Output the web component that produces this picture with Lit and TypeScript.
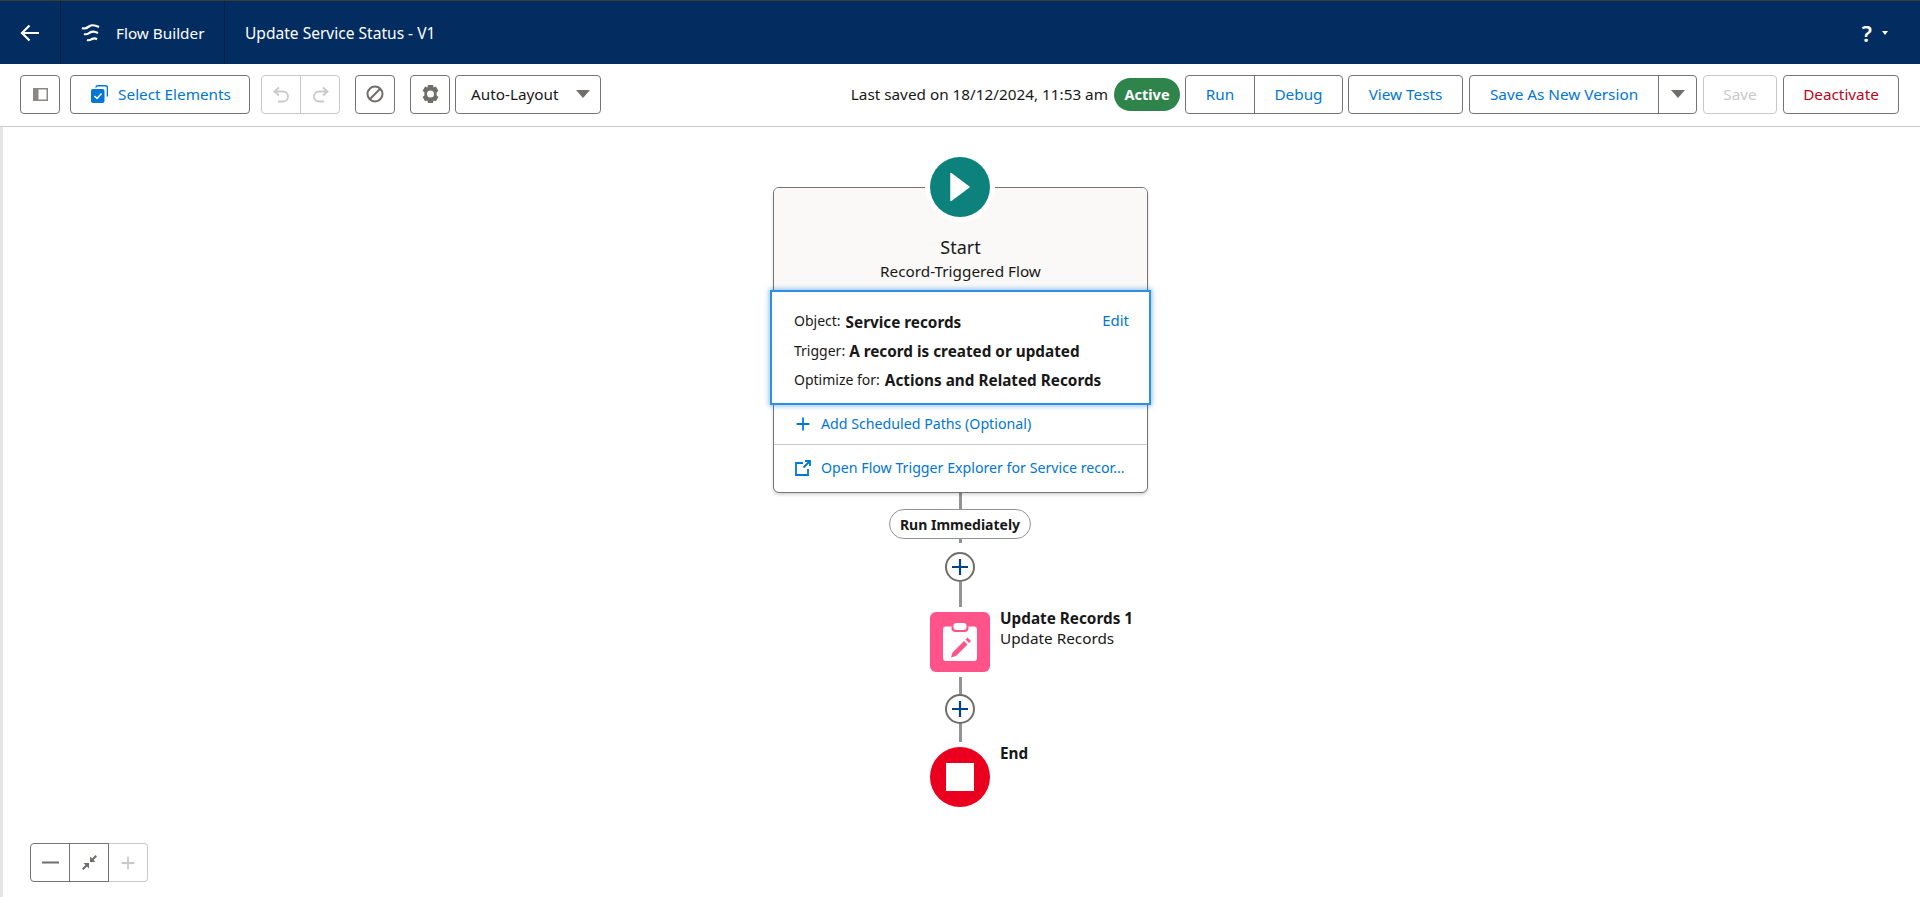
import { LitElement, html, css, svg } from "lit";
import { customElement } from "lit/decorators.js";

const plus = svg`<path d="M10 2v16M2 10h16" fill="none" stroke="currentColor" stroke-width="2.2"/>`;

@customElement("app-root")
export class AppRoot extends LitElement {
  static styles = css`
    :host { display: block; width: 1920px; height: 897px; overflow: hidden; background: #fff; color: #181818;
      font-family: "Noto Sans", "Open Sans", sans-serif; font-size: 15.3px; position: relative; }
    * { box-sizing: border-box; }
    svg { display: block; }
    .strip { height: 1px; background: #3a3a3a; }
    .head { height: 63px; background: #032d60; color: #fff; display: flex; align-items: center; }
    .cell { height: 100%; display: flex; align-items: center; border-right: 1px solid #02204a; }
    .back { width: 61px; justify-content: center; }
    .brand { width: 164px; padding-left: 20px; gap: 15px; }
    .title { padding-left: 20px; flex: 1; font-size: 15.55px; }
    .help { display: flex; align-items: center; gap: 10px; padding-right: 32px; font-size: 22px; font-weight: 600; }
    .caret { width: 0; height: 0; border-left: 3.5px solid transparent; border-right: 3.5px solid transparent; border-top: 4px solid #fff; }
    .bar { height: 63px; border-bottom: 1px solid #c9c9c9; display: flex; align-items: center; padding: 0 21px 2px 20px; }
    .btn { height: 39px; border: 1px solid #747474; border-radius: 4px; background: #fff; color: #0176d3; display: flex; align-items: center; justify-content: center; white-space: nowrap; }
    .ib { width: 40px; color: #706e6b; }
    .group { display: flex; height: 39px; border: 1px solid #747474; border-radius: 4px; }
    .group > div { display: flex; align-items: center; justify-content: center; color: #0176d3; }
    .group > div + div { border-left: 1px solid #747474; }
    .off { border-color: #c9c9c9; }
    .off > div { color: #c9c9c9; }
    .off > div + div { border-left-color: #c9c9c9; }
    .select { width: 180px; margin-left: 10px; gap: 10px; padding-left: 2px; }
    .undo { width: 79px; margin-left: 11px; }
    .undo > div { flex: 1; }
    .block { margin-left: 15px; }
    .gear { margin-left: 15px; }
    .auto { width: 146px; margin-left: 5px; color: #181818; justify-content: space-between; padding: 0 10px 0 15px; }
    .tri { width: 0; height: 0; border-left: 7px solid transparent; border-right: 7px solid transparent; border-top: 8px solid #706e6b; }
    .saved { margin-left: auto; white-space: nowrap; }
    .active { width: 66px; height: 33px; margin-left: 6px; border-radius: 17px; background: #2e844a; color: #fff; font-size: 14.5px; font-weight: 700; display: flex; align-items: center; justify-content: center; }
    .rd { width: 158px; margin-left: 5px; }
    .rd .run { width: 68px; }
    .rd .dbg { flex: 1; }
    .tests { width: 115px; margin-left: 5px; }
    .sv { width: 228px; margin-left: 6px; }
    .sv .a { flex: 1; }
    .sv .b { width: 38px; }
    .save { width: 74px; margin-left: 6px; color: #c9c9c9; border-color: #c9c9c9; }
    .deact { width: 116px; margin-left: 6px; color: #ba0517; }
    .canvas { position: relative; height: 770px; border-left: 3px solid #e5e5e5; }
    .canvas > * { position: absolute; }
    .card { left: 770px; top: 60px; width: 375px; height: 306px; border: 1px solid #747474; border-radius: 6px; background: #fff; box-shadow: 0 2px 3px rgba(0,0,0,.16); overflow: hidden; }
    .card-top { height: 135px; background: #faf9f7; display: flex; flex-direction: column; align-items: center; padding-top: 46px; }
    .card-top .t { font-size: 18px; line-height: 26px; }
    .card-top .s { line-height: 22px; }
    .link { display: flex; align-items: center; gap: 10px; padding-left: 21px; color: #0176d3; font-size: 14.2px; white-space: nowrap; }
    .spacer { height: 80px; }
    .l0 { height: 42px; border-bottom: 1px solid #c9c9c9; }
    .l2 { height: 45px; }
    .start { left: 922px; top: 25px; width: 70px; height: 70px; border-radius: 50%; background: #fff; display: flex; align-items: center; justify-content: center; }
    .disc { width: 60px; height: 60px; border-radius: 50%; display: flex; align-items: center; justify-content: center; }
    .teal { background: #0d827c; }
    .red { background: #ea001e; }
    .stop { width: 28px; height: 28px; background: #fff; }
    .pop { left: 767px; top: 163px; width: 381px; height: 115px; background: #fff; border: 2px solid #2e8fe6; box-shadow: 0 0 5px 1px rgba(1,118,211,.45); padding: 15px 20px 0 22px; font-size: 14px; }
    .row { height: 29px; display: flex; align-items: center; white-space: nowrap; }
    .row b { font-size: 15.3px; font-weight: 700; }
    .r1 b { margin-left: 5px; }
    .r1 span { margin-bottom: 3px; }
    .r2 b { margin-left: 4px; }
    .r3 b { margin-left: 5px; }
    .edit { margin-left: auto; color: #0176d3; font-size: 15px; }
    .ln { left: 955.5px; width: 3px; background: #939393; }
    .ln1 { top: 366px; height: 50px; }
    .ln2 { top: 455px; height: 25px; }
    .ln3 { top: 550px; height: 50px; }
    .ln4 { top: 596px; height: 19px; }
    .pill { left: 886px; top: 382px; width: 142px; height: 30px; border: 1px solid #939393; border-radius: 15px; background: #fff; font-size: 14px; font-weight: 700; display: flex; align-items: center; justify-content: center; white-space: nowrap; }
    .add { left: 942px; width: 30px; height: 30px; border: 2px solid #706e6b; border-radius: 50%; background: #fff; color: #014486; display: flex; align-items: center; justify-content: center; }
    .a1 { top: 425px; }
    .a2 { top: 567px; }
    .pink { left: 927px; top: 485px; width: 60px; height: 60px; border-radius: 6px; background: #ff538a; display: flex; align-items: center; justify-content: center; }
    .end { left: 927px; top: 620px; }
    .lbl { left: 997px; white-space: nowrap; line-height: 20px; }
    .lbl b { display: block; font-weight: 700; }
    .lb1 { top: 481px; }
    .lb2 { top: 616px; }
    .zoom { left: 27px; top: 716px; display: flex; height: 39px; }
    .zoom > div { width: 40px; background: #fff; border: 1px solid #747474; color: #706e6b; display: flex; align-items: center; justify-content: center; }
    .zoom .minus { border-radius: 4px 0 0 4px; }
    .zoom .fit { margin-left: -1px; }
    .zoom .in { width: 39px; color: #c9c9c9; border-color: #c9c9c9; border-left: 0; border-radius: 0 4px 4px 0; }
  `;

  render() {
    return html`
      <div class="strip"></div>
      <header class="head">
        <div class="cell back">
          <svg width="20" height="18" viewBox="0 0 20 18"><path d="M19 9H2M9.500 1.500L2 9l7.500 7.500" fill="none" stroke="#fff" stroke-width="2.200"/></svg>
        </div>
        <div class="cell brand">
          <svg width="20" height="20" viewBox="0 0 20 20"><path d="M1 5c3 1.500 5 0 7-1.500s5-2 10 .5M3 11c3 1 4.500-.5 6-1.500s4-1.500 8 .5M6 17c2 .8 3.500-.2 5-1s3-1 5 .2" fill="none" stroke="#fff" stroke-width="2.200"/></svg>
          <span>Flow Builder</span>
        </div>
        <div class="title">Update Service Status - V1</div>
        <div class="help"><span>?</span><i class="caret"></i></div>
      </header>
      <div class="bar">
        <div class="btn ib">
          <svg width="15" height="13" viewBox="0 0 15 13"><rect x=".75" y=".75" width="13.500" height="11.500" fill="#fff" stroke="#8a8886" stroke-width="1.500"/><rect x="1" y="1" width="4.500" height="11" fill="#8a8886"/></svg>
        </div>
        <div class="btn select">
          <svg width="17" height="18" viewBox="0 0 17 18"><path d="M5 2.500Q5 .8 6.700 .8h8q1.700 0 1.700 1.700v9" fill="none" stroke="#0176d3" stroke-width="1.400"/><rect x="0" y="4" width="13.500" height="14" rx="2" fill="#0176d3"/><path d="M3.500 11l2.500 2.500 4.500-5" fill="none" stroke="#fff" stroke-width="1.500"/></svg>
          <span>Select Elements</span>
        </div>
        <div class="group off undo">
          <div><svg width="17" height="17" viewBox="0 0 17 17"><path d="M6 1.500L1.500 5.500 6 9.500M2 5.500h8a5 5 0 0 1 0 10H5" fill="none" stroke="currentColor" stroke-width="1.800"/></svg></div>
          <div><svg width="17" height="17" viewBox="0 0 17 17"><path d="M11 1.500l4.500 4L11 9.500M15 5.500H7a5 5 0 0 0 0 10h5" fill="none" stroke="currentColor" stroke-width="1.800"/></svg></div>
        </div>
        <div class="btn ib block">
          <svg width="18" height="18" viewBox="0 0 18 18"><circle cx="9" cy="9" r="7.500" fill="none" stroke="#706e6b" stroke-width="2"/><path d="M3.800 14.200L14.200 3.800" stroke="#706e6b" stroke-width="2"/></svg>
        </div>
        <div class="btn ib gear">
          <svg width="17" height="18" viewBox="0 0 17 18"><path fill-rule="evenodd" fill="#706e6b" d="M6 0h5l.6 2.400 2.300-.8 2.500 4.200-1.800 1.700v2.900l1.800 1.700-2.500 4.200-2.300-.8L11 18H6l-.6-2.500-2.300.8L.6 12.100l1.800-1.700V7.500L.6 5.800l2.500-4.200 2.300.8zM8.500 5.500a3.500 3.500 0 1 0 0 7 3.500 3.500 0 0 0 0-7z"/></svg>
        </div>
        <div class="btn auto"><span>Auto-Layout</span><i class="tri"></i></div>
        <div class="saved">Last saved on 18/12/2024, 11:53 am</div>
        <div class="active">Active</div>
        <div class="group rd"><div class="run">Run</div><div class="dbg">Debug</div></div>
        <div class="btn tests">View Tests</div>
        <div class="group sv"><div class="a">Save As New Version</div><div class="b"><i class="tri"></i></div></div>
        <div class="btn save">Save</div>
        <div class="btn deact">Deactivate</div>
      </div>
      <main class="canvas">
        <div class="ln ln1"></div>
        <div class="ln ln2"></div>
        <div class="ln ln3"></div>
        <div class="ln ln4"></div>
        <section class="card">
          <div class="card-top">
            <div class="t">Start</div>
            <div class="s">Record-Triggered Flow</div>
          </div>
          <div class="spacer"></div>
          <div class="link l0">
            <svg width="16" height="16" viewBox="0 0 20 20">${plus}</svg>
            <span>Add Scheduled Paths (Optional)</span>
          </div>
          <div class="link l2">
            <svg width="16" height="16" viewBox="0 0 16 16"><path d="M8 3H1v12h12V9M8.500 7.500L15 1M10 1h5v5" fill="none" stroke="#0176d3" stroke-width="1.800"/></svg>
            <span>Open Flow Trigger Explorer for Service recor...</span>
          </div>
        </section>
        <div class="start">
          <div class="disc teal">
            <svg width="20" height="30" viewBox="0 0 20 30"><path d="M1 1.500v27L19 15z" fill="#fff" stroke="#fff" stroke-linejoin="round" stroke-width="1.500"/></svg>
          </div>
        </div>
        <div class="pop">
          <div class="row r1"><span>Object:</span><b>Service records</b><span class="edit">Edit</span></div>
          <div class="row r2"><span>Trigger:</span><b>A record is created or updated</b></div>
          <div class="row r3"><span>Optimize for:</span><b>Actions and Related Records</b></div>
        </div>
        <div class="pill">Run Immediately</div>
        <div class="add a1"><svg width="20" height="20" viewBox="0 0 20 20">${plus}</svg></div>
        <div class="pink">
          <svg width="34" height="38" viewBox="0 0 34 38"><path fill="#fff" d="M3 3.500h5.500V5a4 4 0 0 0 4 4h9a4 4 0 0 0 4-4V3.500H31a3 3 0 0 1 3 3V35a3 3 0 0 1-3 3H3a3 3 0 0 1-3-3V6.500a3 3 0 0 1 3-3z"/><rect x="10.500" y="0" width="13" height="7" rx="3" fill="#fff"/><path fill="#ff538a" d="M24.500 14.500l3.500 3.500-2 2-3.500-3.500zM21 18l3.500 3.500L13 33l-5 1.500L9.500 29.500z"/></svg>
        </div>
        <div class="lbl lb1"><b>Update Records 1</b>Update Records</div>
        <div class="add a2"><svg width="20" height="20" viewBox="0 0 20 20">${plus}</svg></div>
        <div class="disc red end"><div class="stop"></div></div>
        <div class="lbl lb2"><b>End</b></div>
        <div class="zoom">
          <div class="minus"><svg width="17" height="3" viewBox="0 0 17 3"><path d="M0 1.500h17" stroke="currentColor" stroke-width="2"/></svg></div>
          <div class="fit"><svg width="17" height="17" viewBox="0 0 17 17"><path fill="currentColor" d="M9 8V2.500l2 2L14.500 1 16 2.500l-3.500 3.500 2 2zM8 9v5.500l-2-2L2.500 16 1 14.500 4.500 11l-2-2z"/></svg></div>
          <div class="in"><svg width="16" height="16" viewBox="0 0 20 20">${plus}</svg></div>
        </div>
      </main>
    `;
  }
}
